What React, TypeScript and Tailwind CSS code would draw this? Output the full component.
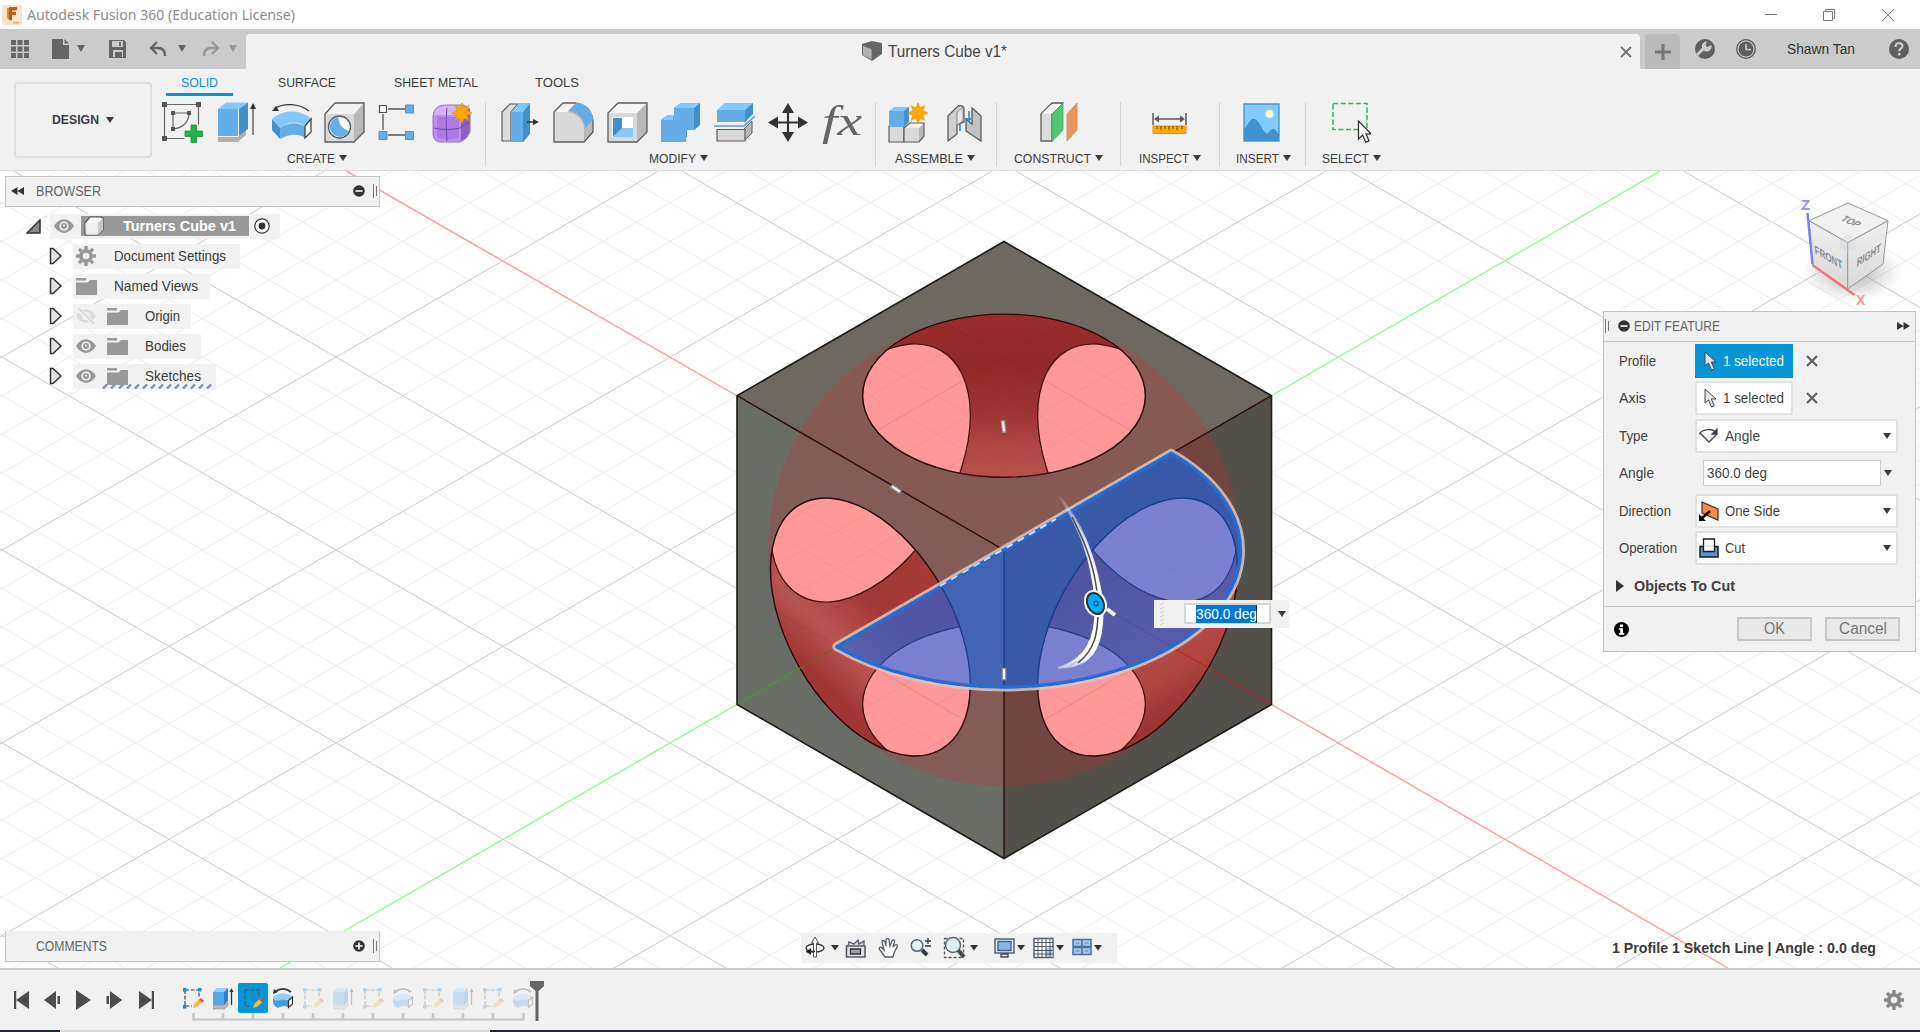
import React, { useLayoutEffect, useRef } from "react";

/** Text condensed or widened to an exact width. */
function Fit({ w, className = "", children }: { w: number; className?: string; children: string }) {
  const ref = useRef<HTMLSpanElement>(null);
  useLayoutEffect(() => {
    const el = ref.current;
    if (el && el.offsetWidth) el.style.transform = `scaleX(${w / el.getBoundingClientRect().width})`;
  }, [w]);
  return (
    <span className={"inline-block shrink-0 whitespace-nowrap " + className} style={{ width: w }}>
      <span ref={ref} className="inline-block origin-left">{children}</span>
    </span>
  );
}

function Caret({ className = "text-[#3c3c3c]" }: { className?: string }) {
  return (
    <svg width="8" height="6" viewBox="0 0 8 6" className={"shrink-0 " + className}>
      <path d="M0 0h8L4 6z" fill="currentColor" />
    </svg>
  );
}

/* ---------- large ribbon icons, 41 x 41 ---------- */
function Big({ children, w = 41 }: { children: React.ReactNode; w?: number }) {
  return (
    <svg width={w} height="41" viewBox={`0 0 ${w} 41`} className="shrink-0">
      {children}
    </svg>
  );
}
const star = "M0-11L2.2-5.6 7.4-8 5.4-2.6 11 0 5.4 2.6 7.4 8 2.2 5.6 0 11-2.2 5.6-7.4 8-5.4 2.6-11 0-5.4-2.6-7.4-8-2.2-5.6z";

const SketchIcon = () => (
  <Big>
    <g fill="none" stroke="#666" strokeWidth="1.2">
      <path d="M2.5 2.5h34v20M2.5 2.5v34h20M11 11h16M11 11v16M27 11c0 9-6 15-16 16" />
    </g>
    <g fill="#555">
      <path d="M0 0h5v5H0zM34 0h5v5h-5zM0 34h5v5H0zM9 9h4v4H9zM25 9h4v4h-4zM9 25h4v4H9z" />
    </g>
    <path d="M29 23h5.500v6h6v5.500h-6v6H29v-6h-6V29h6z" fill="#22b14c" stroke="#15923a" strokeWidth=".8" />
  </Big>
);
const ExtrudeIcon = () => (
  <Big>
    <path d="M2 35h20l8-7v5l-8 7H2z" fill="#b0b0b0" />
    <path d="M2 7h20v27H2z" fill="#64ade6" />
    <path d="M2 7l8-6.500h22L23 7z" fill="#85c9fc" />
    <path d="M23 7l9-6.500V27l-9 7z" fill="#4290cb" />
    <path d="M37 5v28" stroke="#444" strokeWidth="1.200" />
    <path d="M34 7l3-6 3 6z" fill="#333" />
  </Big>
);
const RevolveIcon = () => (
  <span className="relative left-[1.500px]">
    <Big>
      <path d="M3 6C12 1 27 1 37 9" fill="none" stroke="#333" strokeWidth="1.300" />
      <path d="M0 9l4-5 3 5z" fill="#333" />
      <path d="M0 17C11 7 28 7 40 17l-6 8C25 19 17 19 8 26z" fill="#83c8fb" />
      <path d="M0 17l8 9v11l-8-9z" fill="#4290cb" />
      <path d="M8 26c9-6 17-6 26-1v11c-9-5-17-4-26 1z" fill="#64ade6" />
      <path d="M33 24l6-7v13l-6 6z" fill="#fff" stroke="#444" strokeWidth="1.300" />
    </Big>
  </span>
);
const HoleIcon = () => (
  <Big>
    <path d="M1 12L11 1h29v29L30 40H1z" fill="#b8b8b8" />
    <path d="M1 12L11 1h29L30 12z" fill="#f4f4f4" />
    <path d="M1 12h29v28H1z" fill="#d9d9d9" />
    <path d="M1 12L11 1h29v29L30 40H1z" fill="none" stroke="#5c5c5c" strokeWidth="1.300" />
    <circle cx="15.500" cy="25" r="11" fill="#f6f6f6" stroke="#5c5c5c" strokeWidth="1.300" />
    <path d="M14 15a10 10 0 1 0 11 14C18 27 15 22 14 15z" fill="#64ade6" />
  </Big>
);
const PatternIcon = () => (
  <Big>
    <path d="M10 7h17M5 12v16M10 33h17" stroke="#555" strokeWidth="1.300" />
    <path d="M1.500 3.500h7v7h-7z" fill="#fff" stroke="#555" strokeWidth="1.200" />
    <path d="M27.500 3h8v8h-8zM1 29.500h8v8H1zM27.500 29.500h8v8h-8z" fill="#64ade6" stroke="#4a93cf" />
  </Big>
);
const FormIcon = () => (
  <Big>
    <path d="M1 14C2 5 8 3 15 3h16c5 1 7 6 7 12v14c-2 7-6 9-10 11H9c-5 0-8-3-8-9z" fill="#bd8df0" />
    <path d="M1 14C2 5 8 3 15 3h14l-4 10H5z" fill="#d4b2fa" />
    <path d="M29 12l9-6v22c-2 6-5 9-9 11z" fill="#8d5fc4" />
    <path d="M5 15h22v20c-8 3-15 3-22 0z" fill="#aa7be4" />
    <path d="M15 6c-1 10-1 20 0 33M2 26c9 2 17 2 26 0l9-6" fill="none" stroke="#7447a8" />
    <path d="M1 14C2 5 8 3 15 3h16c5 1 7 6 7 12v14c-2 7-6 9-10 11H9c-5 0-8-3-8-9z" fill="none" stroke="#9b6dd2" />
    <path d={star} transform="translate(30 11) scale(.92)" fill="#ffa800" stroke="#e59400" strokeWidth=".7" />
  </Big>
);
const PressPullIcon = () => (
  <Big>
    <path d="M3 10L11 2h8L12 10v29H3z" fill="#ddd" stroke="#5c5c5c" strokeWidth="1.200" />
    <path d="M12 10h13v30H12z" fill="#64ade6" />
    <path d="M12 10l8-9h11l-7 9z" fill="#85c9fc" />
    <path d="M24 10l7-9v31l-7 8z" fill="#4290cb" />
    <path d="M28 20h7" stroke="#333" strokeWidth="1.500" />
    <path d="M34 17l6 3-6 3z" fill="#333" />
  </Big>
);
const FilletIcon = () => (
  <Big>
    <path d="M1 10L10 1h12c11 1 17 9 18 18v11l-9 10H1z" fill="#b8b8b8" />
    <path d="M1 10L10 1h12l-7 9z" fill="#f5f5f5" />
    <path d="M1 10h13c10 1 17 8 17 17v13H1z" fill="#d9d9d9" />
    <path d="M1 10L10 1h12c11 1 17 9 18 18v11l-9 10H1z" fill="none" stroke="#5c5c5c" strokeWidth="1.300" />
    <path d="M15 9l8-8c11 0 17 8 17 17l-8 8C32 17 25 9 15 9z" fill="#64ade6" />
  </Big>
);
const ShellIcon = () => (
  <Big>
    <path d="M1 11L11 1h29v29L30 40H1z" fill="#b8b8b8" />
    <path d="M1 11L11 1h29L30 11z" fill="#f5f5f5" />
    <path d="M1 11h29v29H1z" fill="#d9d9d9" />
    <path d="M1 11L11 1h29v29L30 40H1z" fill="none" stroke="#5c5c5c" strokeWidth="1.300" />
    <path d="M5 15h21v20H5z" fill="#fff" />
    <path d="M6 16h9v11l-9 8z" fill="#4290cb" />
    <path d="M6 35l9-9h11v9z" fill="#85c9fc" />
  </Big>
);
const CombineIcon = () => (
  <Big>
    <path d="M1 18l7-5h6V6l7-5h19v22l-6 5h-7v7l-6 5H1z" fill="#4290cb" />
    <path d="M1 18l7-5h6l-1 5zM14 6l7-5h19l-6 5z" fill="#85c9fc" />
    <path d="M1 18h13V6h20v22h-8v12H1z" fill="#64ade6" />
  </Big>
);
const SplitIcon = () => (
  <Big>
    <path d="M3 8h29v12H3z" fill="#64ade6" />
    <path d="M3 8l8-7h28l-8 7z" fill="#85c9fc" />
    <path d="M31 8l8-7v11l-8 8z" fill="#4290cb" />
    <path d="M0 24h30L41 14" fill="none" stroke="#4aa3e6" strokeWidth="1.600" />
    <path d="M30 27l8-8v12l-8 8z" fill="#b8b8b8" stroke="#5c5c5c" />
    <path d="M3 27.500h28V39H3z" fill="#d9d9d9" stroke="#5c5c5c" strokeWidth="1.200" />
  </Big>
);
const MoveIcon = () => (
  <Big>
    <path d="M20 8v25M8 20.500h25" stroke="#333" strokeWidth="2.200" />
    <path d="M20 1l6 10H14zM20 40l6-10H14zM0 20.500l10-6v12zM40 20.500l-10-6v12z" fill="#333" />
  </Big>
);
const NewComponentIcon = () => (
  <Big>
    <path d="M2 24h15v16H2z" fill="#d9d9d9" stroke="#5c5c5c" strokeWidth="1.200" />
    <path d="M17 26l6-5h14v13l-5 6H17z" fill="#b8b8b8" />
    <path d="M17 26l6-5h14l-5 5z" fill="#f3f3f3" />
    <path d="M17 26h15v14H17z" fill="#d9d9d9" />
    <path d="M17 26l6-5h14v13l-5 6H17z" fill="none" stroke="#5c5c5c" strokeWidth="1.200" />
    <path d="M2 9h15v16H2z" fill="#64ade6" />
    <path d="M2 9l5-4h16l-5 4z" fill="#85c9fc" />
    <path d="M17 9l5-4v15l-5 5z" fill="#4290cb" />
    <path d={star} transform="translate(31 11) scale(.92)" fill="#ffa800" stroke="#e59400" strokeWidth=".7" />
  </Big>
);
const JointIcon = () => (
  <span className="relative -left-px">
    <Big>
      <path d="M4 14L14 4c4-1 6 0 6 3v13l-7 3v9l-9 7z" fill="#cfcfcf" stroke="#5c5c5c" strokeWidth="1.300" />
      <path d="M13 10l6-5v14l-6 4z" fill="#e6e6e6" stroke="#777" strokeWidth=".8" />
      <path d="M37 14l-9-8v16l-6-5v12l15 10z" fill="#c2c2c2" stroke="#5c5c5c" strokeWidth="1.300" />
      <path d="M16 21v8M25 9v10" stroke="#2e8bdc" strokeWidth="1.600" />
      <path d="M22 16h6l-3 4z" fill="#2e8bdc" />
    </Big>
  </span>
);
const PlaneIcon = () => (
  <Big>
    <path d="M3 12L14 1h11L14 12v27H3z" fill="#dcdcdc" stroke="#5c5c5c" strokeWidth="1.300" />
    <path d="M4 11.500L14 2h10L14 11.500z" fill="#f6f6f6" />
    <path d="M14 12L25 1v27L14 39.500z" fill="#52c577" stroke="#3cad61" strokeWidth=".8" />
    <path d="M29 12L39 1v27L29 39z" fill="#e6965f" stroke="#d9854c" strokeWidth=".8" />
  </Big>
);
const MeasureIcon = () => (
  <Big>
    <path d="M4 11v12M37 11v12M7 17h27" stroke="#5a5a5a" strokeWidth="1.500" />
    <path d="M5 17l5-3.500v7zM36 17l-5-3.500v7z" fill="#5a5a5a" />
    <path d="M4 24h33v7.500H4z" fill="#ffa90a" stroke="#e09208" />
    <path d="M8 24v3M12 24v4M16 24v3M20 24v4M24 24v3M28 24v4M33 24v3" stroke="#6b4b10" strokeWidth="1" />
  </Big>
);
const ImageIcon = () => (
  <Big>
    <path d="M3 2h35v37H3z" fill="#83cafd" stroke="#4598d2" strokeWidth="1.400" />
    <path d="M3 27c4-4 6-11 10-10 6 1 8 12 13 15 3-2 4-6 7-5 2 1 3 4 5 5v7H3z" fill="#3f92cd" />
    <circle cx="28.500" cy="12" r="4" fill="#fdfbd0" stroke="#d9dca0" strokeWidth=".7" />
  </Big>
);
const SelectIcon = () => (
  <Big>
    <path d="M3 1.500h34v26H3z" fill="none" stroke="#35b45c" strokeWidth="1.500" strokeDasharray="5.200 2.400" />
    <path d="M28.500 19v18l4.200-4 3 7.200 3.300-1.400-3-7h5z" fill="#fff" stroke="#333" strokeWidth="1.300" />
  </Big>
);
const FxIcon = () => (
  <span className="block w-[42px] font-['Liberation_Serif',serif] text-[42px] leading-[38px] text-[#666] italic">
    <Fit w={40}>fx</Fit>
  </span>
);

type Group = { label: string; lw: number; cls: string; icons: React.FC[]; shift?: string };
const groups: Group[] = [
  { label: "CREATE", lw: 48, cls: "w-[330px] pr-[6px]", icons: [SketchIcon, ExtrudeIcon, RevolveIcon, HoleIcon, PatternIcon, FormIcon], shift: "pr-[2px]" },
  { label: "MODIFY", lw: 47, cls: "w-[390px] pl-[7px] pr-[5px]", icons: [PressPullIcon, FilletIcon, ShellIcon, CombineIcon, SplitIcon, MoveIcon, FxIcon], shift: "pr-[6px]" },
  { label: "ASSEMBLE", lw: 68, cls: "w-[121px] px-[2px]", icons: [NewComponentIcon, JointIcon], shift: "pr-[2px]" },
  { label: "CONSTRUCT", lw: 77, cls: "w-[124px]", icons: [PlaneIcon] },
  { label: "INSPECT", lw: 50, cls: "w-[99px] pr-[1px]", icons: [MeasureIcon] },
  { label: "INSERT", lw: 43, cls: "w-[86px] pr-[2px]", icons: [ImageIcon], shift: "pl-[3px]" },
  { label: "SELECT", lw: 47, cls: "w-[94px] border-r-0 pr-[5px]", icons: [SelectIcon], shift: "pl-[2px]" },
];

function TitleBar() {
  return (
    <div className="flex h-[29px] items-center bg-white pl-[2px]">
      <svg width="20" height="20" viewBox="0 0 20 20">
        <rect width="20" height="20" rx="1" fill="#fbe3cf" />
        <path d="M5 3h10l-2 3H9v10l-4-3z" fill="#e08a3c" />
        <path d="M7 2h8v3h-5v2h4v3h-4v5H7z" fill="#b05f1c" />
        <path d="M11 17h6v1.500h-6z" fill="#eba95f" />
      </svg>
      <div className="mb-[2px] ml-[5px] text-[#8c8c8c] font-['Noto_Sans',sans-serif] text-[15px] leading-[26px]">
        <Fit w={268}>Autodesk Fusion 360 (Education License)</Fit>
      </div>
      <svg width="160" height="28" viewBox="0 0 160 28" className="ml-auto mr-[9px]" fill="none" stroke="#7d7d7d">
        <path d="M14 13.500h12M72.500 10.500h9v9h-9zM74.500 10.500v-2h9v9h-2M131 8l12 12M143 8l-12 12" />
      </svg>
    </div>
  );
}

function TabStrip() {
  return (
    <div className="flex h-[40px] bg-[#cbcbcb] pt-[5px]">
      <svg width="246" height="35" viewBox="0 34 246 35" className="shrink-0 text-[#666]">
        <path fill="currentColor" d="M11 40h5v5h-5zM17.500 40h5v5h-5zM24 40h5v5h-5zM11 46.500h5v5h-5zM17.500 46.500h5v5h-5zM24 46.500h5v5h-5zM11 53h5v5h-5zM17.500 53h5v5h-5zM24 53h5v5h-5z" />
        <path fill="currentColor" d="M52 39h11v6h6v14H52zM64.500 39l4.500 4.500h-4.500zM77 45h8l-4 7z" />
        <path fill="currentColor" fillRule="evenodd" d="M109 40h15l2 2v16h-17zM112 41v6h11v-6zM113 50v7h2v-5h7v5h1v-7zM119 42h2v4h-2z" />
        <path d="M157 42l-6 6 6 6M152 48h6c5 0 7 3 7 8" fill="none" stroke="currentColor" strokeWidth="2.400" />
        <path fill="currentColor" d="M178 45h8l-4 7z" />
        <g opacity=".5">
          <path d="M212 42l6 6-6 6M217 48h-6c-5 0-7 3-7 8" fill="none" stroke="currentColor" strokeWidth="2.400" />
          <path fill="currentColor" d="M229 45h8l-4 7z" />
        </g>
      </svg>
      <div className="flex w-[1394px] items-center rounded-t-[4px] bg-[#f1f1f1]">
        <div className="flex flex-1 items-center justify-center pl-[2px]">
          <svg width="20" height="20" viewBox="0 0 20 20" className="mb-px">
            <path d="M0 3L10 0l10 2v11l-10 7-10-6z" fill="#666" />
            <path d="M1 5l8.500 3v10.500L1 14z" fill="#aeb2b4" />
          </svg>
          <div className="ml-[6px] pt-px text-[16px] leading-[34px] text-[#444]">
            <Fit w={119}>Turners Cube v1*</Fit>
          </div>
        </div>
        <svg width="12" height="12" viewBox="0 0 12 12" className="mr-[8px] mt-[1px]">
          <path d="M1 1l10 10M11 1L1 11" stroke="#757575" strokeWidth="1.800" />
        </svg>
      </div>
      <div className="ml-[5px] flex w-[35px] items-center justify-center rounded-t-[4px] bg-[#bbb]">
        <svg width="16" height="16" viewBox="0 0 16 16"><path d="M8 0v16M0 8h16" stroke="#777" strokeWidth="3" /></svg>
      </div>
      <div className="flex h-[30px] flex-1 items-center">
        <svg width="20" height="20" viewBox="0 0 20 20" className="ml-[15px]">
          <circle cx="10" cy="10" r="10" fill="#5f5f5f" />
          <path d="M2 16l7-7" stroke="#cbcbcb" strokeWidth="3" />
          <path d="M16.500 6a5 5 0 1 1-4.500-3.500L10.500 6l1.500 2z" fill="#cbcbcb" />
        </svg>
        <svg width="20" height="20" viewBox="0 0 20 20" className="ml-[21px]">
          <circle cx="10" cy="10" r="9.300" fill="none" stroke="#5f5f5f" strokeWidth="1.300" />
          <circle cx="10" cy="10" r="7.500" fill="#5f5f5f" />
          <path d="M10 5v5.500h5" fill="none" stroke="#cbcbcb" strokeWidth="1.600" />
        </svg>
        <div className="ml-[31px] text-[14px] leading-[28px] text-[#333]"><Fit w={68}>Shawn Tan</Fit></div>
        <svg width="20" height="20" viewBox="0 0 20 20" className="ml-[34px]">
          <circle cx="10" cy="10" r="10" fill="#5f5f5f" />
          <path d="M6.500 8c0-5 7-5 7-1 0 2.500-3.300 2.500-3.300 5.200" fill="none" stroke="#cbcbcb" strokeWidth="2.200" />
          <path d="M9 14h2.500v2.500H9z" fill="#cbcbcb" />
        </svg>
      </div>
    </div>
  );
}

function Ribbon() {
  return (
    <div className="flex h-[102px] border-b border-[#dcdcdc] bg-[#f1f1f1] text-[13.500px] text-[#3c3c3c]">
      <div className="ml-[14px] mt-[13px] flex h-[76px] w-[138px] items-center justify-center gap-[7px] rounded-[4px] border-2 border-[#dedede] text-[13.500px] font-bold">
        <Fit w={47}>DESIGN</Fit>
        <Caret />
      </div>
      <div className="ml-[4px] flex flex-col">
        <div className="flex h-[33px] items-start pt-[5px] leading-[18px]">
          <div className="ml-[10px] flex h-[22px] w-[67px] justify-center rounded-[1px] border-b-[3.500px] border-[#0696d7] pr-px text-[#0696d7]">
            <Fit w={37}>SOLID</Fit>
          </div>
          <Fit w={58} className="ml-[45px]">SURFACE</Fit>
          <Fit w={84} className="ml-[58px]">SHEET METAL</Fit>
          <Fit w={44} className="ml-[57px]">TOOLS</Fit>
        </div>
        <div className="flex h-[64px]">
          {groups.map((g) => (
            <div key={g.label} className={"flex flex-col border-r border-[#d6d6d6] " + g.cls}>
              <div className="flex h-[42px] shrink-0 justify-around">
                {g.icons.map((I, i) => <I key={i} />)}
              </div>
              <div className={"flex h-[30px] shrink-0 items-center justify-center gap-[4px] leading-[20px] " + (g.shift ?? "")}>
                <Fit w={g.lw}>{g.label}</Fit>
                <span className="mb-[2px] flex"><Caret /></span>
              </div>
            </div>
          ))}
        </div>
      </div>
    </div>
  );
}

/* ---------- modelling canvas ---------- */
const CX = 1004;
const CY = 550;
const T = 0.5774;
function gridLines(step: number, skipMajor: boolean) {
  let d = "";
  for (let k = -46; k <= 46; k++) {
    if (skipMajor && k % 5 === 0) continue;
    const c = k * step * 2 * T;
    d += `M0 ${(CY + c - T * CX).toFixed(1)}L1920 ${(CY + c + T * (1920 - CX)).toFixed(1)}`;
    d += `M0 ${(CY + c + T * CX).toFixed(1)}L1920 ${(CY + c - T * (1920 - CX)).toFixed(1)}`;
  }
  return d;
}
const minor = gridLines(33.4, true);
const major = gridLines(167, false);
const HEX = "M1004 241.500L1271.500 395.700V704.500L1004 858.500 737 704.500V395.700z";
const HALF = "M1171.200 453.300A236.500 136.700 0 0 1 1240.500 550A236.500 136.700 0 0 1 1004 687A236.500 136.700 0 0 1 836.800 646.700z";

const faces = {
  top: { cx: 1004, cy: 395.7, rx: 141.3, ry: 81.6 },
  bottom: { cx: 1004, cy: 704.3, rx: 141.3, ry: 81.6 },
  right: { cx: 1137.6, cy: 627, rx: 81.6, ry: 141.3, transform: "rotate(30 1137.600 627)" },
  backLeft: { cx: 870.4, cy: 473, rx: 81.6, ry: 141.3, transform: "rotate(30 870.400 473)" },
  left: { cx: 870.4, cy: 627, rx: 81.6, ry: 141.3, transform: "rotate(-30 870.400 627)" },
  backRight: { cx: 1137.6, cy: 473, rx: 81.6, ry: 141.3, transform: "rotate(-30 1137.600 473)" },
};

function Canvas() {
  const pink = { fill: "#ff9898", stroke: "#3c0c0c", strokeWidth: 1.2 };
  return (
    <svg className="absolute inset-0" width="1920" height="797" viewBox="0 171 1920 797" fill="none">
      <defs>
        <clipPath id="cTop"><ellipse {...faces.top} /></clipPath>
        <clipPath id="cRight"><ellipse {...faces.right} /></clipPath>
        <clipPath id="cLeft"><ellipse {...faces.left} /></clipPath>
        <clipPath id="cHoles"><ellipse {...faces.top} /><ellipse {...faces.left} /><ellipse {...faces.right} /></clipPath>
        <clipPath id="cOutside"><path clipRule="evenodd" d={"M700 200h620v700H700z" + HALF} /></clipPath>
        <linearGradient id="gTop" x1="0" y1="314" x2="0" y2="477" gradientUnits="userSpaceOnUse">
          <stop offset="0" stopColor="#9c2c2b" /><stop offset=".3" stopColor="#902828" /><stop offset=".6" stopColor="#9c3532" /><stop offset=".8" stopColor="#b14642" /><stop offset="1" stopColor="#b9504c" />
        </linearGradient>
        <linearGradient id="gLeft" x1="770" y1="640" x2="950" y2="590" gradientUnits="userSpaceOnUse">
          <stop offset="0" stopColor="#9c3430" /><stop offset=".14" stopColor="#a03632" /><stop offset=".36" stopColor="#b85450" /><stop offset=".62" stopColor="#a43a36" /><stop offset="1" stopColor="#a43b36" />
        </linearGradient>
        <linearGradient id="gRight" x1="1060" y1="580" x2="1220" y2="670" gradientUnits="userSpaceOnUse">
          <stop offset="0" stopColor="#9c3632" /><stop offset=".6" stopColor="#b24a46" /><stop offset=".8" stopColor="#b04642" /><stop offset="1" stopColor="#993430" />
        </linearGradient>
        <linearGradient id="gArc" x1="0" y1="493" x2="0" y2="668" gradientUnits="userSpaceOnUse">
          <stop offset="0" stopColor="#fff" stopOpacity="0" /><stop offset=".3" stopColor="#fff" stopOpacity=".75" /><stop offset=".5" stopColor="#fff" /><stop offset=".93" stopColor="#fff" /><stop offset="1" stopColor="#fff" stopOpacity=".3" />
        </linearGradient>
        <radialGradient id="shade"><stop offset="0" stopColor="#777" stopOpacity=".6" /><stop offset="1" stopColor="#999" stopOpacity="0" /></radialGradient>
        <linearGradient id="vl" x1="0" y1="0" x2="0" y2="1"><stop offset="0" stopColor="#efefef" /><stop offset="1" stopColor="#d8d8d8" /></linearGradient>
      </defs>
      <path fill="#fefefe" d="M0 171h1920v797H0z" />
      <path d={minor} stroke="#ebebeb" />
      <path d={major} stroke="#cbcbcb" />
      <path d="M346 171L737 395.700M1271.500 704.500L1728 968" stroke="#ff9c9c" strokeWidth="1.300" />
      <path d="M1660 171L1271.500 395.700M737 704.500L280 968" stroke="#93ff93" strokeWidth="1.300" />

      {/* cube body */}
      <path d="M1004 241.500L1271.500 395.700 1004 550 737 395.700z" fill="#6d6960" />
      <path d="M737 395.700L1004 550V858.500L737 704.500z" fill="#6a6c66" />
      <path d="M1271.500 395.700L1004 550V858.500L1271.500 704.500z" fill="#535049" />
      <circle cx="1004" cy="550" r="236" fill="#ea191f" fillOpacity=".2" />
      <path d="M737 395.700L1004 550 1271.500 395.700M1004 550V858.500" stroke="#2a0c0a" strokeWidth="1.400" />
      <g clipPath="url(#cTop)">
        <ellipse {...faces.top} fill="url(#gTop)" />
        <ellipse {...faces.backLeft} {...pink} />
        <ellipse {...faces.backRight} {...pink} />
      </g>
      <g clipPath="url(#cLeft)">
        <ellipse {...faces.left} fill="url(#gLeft)" />
        <ellipse {...faces.backLeft} {...pink} />
        <ellipse {...faces.bottom} {...pink} />
      </g>
      <g clipPath="url(#cRight)">
        <ellipse {...faces.right} fill="url(#gRight)" />
        <ellipse {...faces.backRight} {...pink} />
        <ellipse {...faces.bottom} {...pink} />
      </g>
      <g stroke="#260a0a" strokeWidth="1.400">
        <ellipse {...faces.top} /><ellipse {...faces.left} /><ellipse {...faces.right} />
      </g>
      <g clipPath="url(#cHoles)">
        <path d={minor} stroke="#402020" strokeOpacity=".045" />
        <path d={major} stroke="#402020" strokeOpacity=".13" />
      </g>
      <path d="M1060 582.300L1271.500 704.500" stroke="#c42020" strokeOpacity=".8" strokeWidth="1.200" />
      <path d="M833 649L800 668" stroke="#7a6420" strokeWidth="1.200" />
      <path d="M800 668L737 704.500" stroke="#3f9a30" strokeWidth="1.200" />
      <path d={HEX} stroke="#1c1c1a" strokeWidth="1.600" />

      {/* selected half-disc profile */}
      <path d={HALF} fill="#0d6bfd" fillOpacity=".55" />
      <path d={HALF} clipPath="url(#cOutside)" stroke="#dcc4c0" strokeOpacity=".85" strokeWidth="9" strokeLinejoin="round" />
      <path d={HALF} stroke="#216dd3" strokeWidth="3.400" strokeLinejoin="round" />
      <path d="M984 560.500L1056 519" stroke="#d0e2f2" strokeWidth="2" strokeDasharray="7 6" />
      <path d="M940 586L984 560.500" stroke="#d0e2f2" strokeWidth="1.500" strokeDasharray="7 6" />

      {/* rotation handle */}
      <path d="M1057 493C1082 530 1092 560 1096 602C1097 640 1086 660 1058 668C1096 668 1104 640 1102 602C1096 560 1082 522 1057 493z" fill="url(#gArc)" stroke="url(#gArc)" strokeWidth="2.500" />
      <path d="M1072 517C1088 548 1095 570 1098 600C1099 636 1094 650 1078 663" stroke="#505050" strokeWidth="1.600" />
      <path d="M1107 609l8 6" stroke="#fff" strokeWidth="4" />
      <ellipse cx="1095.500" cy="603.500" rx="8.500" ry="11.500" transform="rotate(-25 1095.500 603.500)" fill="#0aaaff" stroke="#fff" strokeWidth="5" />
      <ellipse cx="1095.500" cy="603.500" rx="8" ry="11" transform="rotate(-25 1095.500 603.500)" fill="#0aaaff" stroke="#1d3440" strokeWidth="2" />
      <circle cx="1096" cy="603.500" r="2.300" stroke="#065f96" strokeWidth="1.300" />
      <g strokeLinecap="square">
        <path d="M1003 422.500l1 8M1004 670v8M893 487l6 4" stroke="#999" strokeWidth="4.500" />
        <path d="M1003 422.500l1 8M1004 670v8M893 487l6 4" stroke="#f3f3f3" strokeWidth="2" />
      </g>

      {/* view cube */}
      <ellipse cx="1852" cy="272" rx="50" ry="30" fill="url(#shade)" />
      <path d="M1848 203l40 17.700-40.300 22-38.700-22z" fill="#f1f1f1" stroke="#999" />
      <path d="M1809 220.700l38.700 22V289l-35-24z" fill="url(#vl)" stroke="#999" />
      <path d="M1847.700 242.700l40.300-22-5 43.300-35.300 25z" fill="url(#vl)" stroke="#999" />
      <path d="M1847.700 234l8 5v10l-8 3-8-3v-10z" fill="#c9d3dd" fillOpacity=".35" />
      <path d="M1807.500 213l5 51" stroke="#8080f5" strokeWidth="2.500" />
      <path d="M1812.500 265l42 30" stroke="#f07878" strokeWidth="2.500" />
      <g fontFamily="'Liberation Sans', sans-serif">
        <text x="1801" y="210" fontSize="15" fontWeight="bold" fill="#8f8ff5">Z</text>
        <text x="1856" y="305" fontSize="14" fontWeight="bold" fill="#ff8f8f">X</text>
        <g fontSize="12" fontWeight="bold" fill="#868b91">
          <text transform="matrix(.86 .5 .1 1 1815 253.500)" textLength="32" lengthAdjust="spacingAndGlyphs">FRONT</text>
          <text transform="matrix(.86 -.56 -.08 1 1856.500 267)" textLength="28" lengthAdjust="spacingAndGlyphs">RIGHT</text>
          <text transform="matrix(.86 .4 -.7 .55 1840 220)" textLength="19" lengthAdjust="spacingAndGlyphs">TOP</text>
        </g>
      </g>
    </svg>
  );
}

function Grip() {
  return (
    <svg width="4" height="14" viewBox="0 0 4 14" className="shrink-0"><path d="M.5 0v14M3.500 2v10" stroke="#777" /></svg>
  );
}
function Disc({ plus = false }: { plus?: boolean }) {
  return (
    <svg width="12" height="12" viewBox="0 0 12 12" className="shrink-0">
      <circle cx="6" cy="6" r="5.800" fill="#333" />
      <path d={plus ? "M2.500 6h7M6 2.500v7" : "M2.500 6h7"} stroke="#fff" strokeWidth="1.600" />
    </svg>
  );
}
const Eye = () => (
  <svg width="20" height="14" viewBox="0 0 20 14" className="shrink-0">
    <path d="M0 7C5-2 15-2 20 7 15 16 5 16 0 7z" fill="#999" />
    <circle cx="10" cy="7" r="4.600" fill="#f0f0f0" /><circle cx="10" cy="7" r="3" fill="#999" /><circle cx="10" cy="6.500" r="1" fill="#eee" />
  </svg>
);
const EyeOff = () => (
  <svg width="20" height="16" viewBox="0 0 20 16" className="shrink-0">
    <path d="M0 8C5-1 15-1 20 8 15 17 5 17 0 8z" fill="#dcdcdc" />
    <circle cx="10" cy="8" r="4" fill="#f2f2f2" /><circle cx="10" cy="8" r="2.500" fill="#dcdcdc" />
    <path d="M1 0l17 16" stroke="#f2f2f2" strokeWidth="4" /><path d="M2 0l16 15.500" stroke="#d4d4d4" strokeWidth="1.500" />
  </svg>
);
const Folder = () => (
  <svg width="21" height="17" viewBox="0 0 21 17" className="shrink-0">
    <path d="M0 4.500h11.500L14 2h7v15H0z" fill="#999" /><path d="M0 0h10v2.500H0z" fill="#999" />
  </svg>
);
function Gear({ size, color }: { size: number; color: string }) {
  return (
    <svg width={size} height={size} viewBox="0 0 20 20" className="shrink-0">
      <g stroke={color} strokeWidth="3.400">
        <path d="M10 0v20M0 10h20M2.900 2.900l14.200 14.200M17.100 2.900L2.900 17.100" />
      </g>
      <circle cx="10" cy="10" r="7" fill={color} /><circle cx="10" cy="10" r="3.200" fill="#f1f1f1" />
    </svg>
  );
}

function TreeRow({ width, icons, label, lw, last = false }: { width: string; icons: React.ReactNode; label: string; lw: number; last?: boolean }) {
  return (
    <div className="flex h-[30px] items-center">
      <svg width="14" height="18" viewBox="0 0 14 18" className="mr-[10px] shrink-0">
        <path d="M1.500 1.500H4L12 9l-8 7.500H1.500z" fill="#e2e2e4" stroke="#333" strokeWidth="1.500" />
      </svg>
      <div className={"relative flex h-[25px] items-center bg-[#f2f2f2] pl-[3px] " + width}>
        {icons}
        <Fit w={lw} className="text-[15px] leading-[24px] text-[#3a3a3a]">{label}</Fit>
        {last && (
          <svg width="112" height="5" viewBox="0 0 112 5" className="absolute bottom-0 left-[29px]">
            {Array.from({ length: 14 }, (_, i) => (
              <path key={i} d={`M${i * 8 + 1} 4.500l4-4`} stroke="#7d92b8" strokeWidth="2.400" />
            ))}
          </svg>
        )}
      </div>
    </div>
  );
}

function Browser() {
  return (
    <div>
      <div className="flex h-[31px] w-[375px] items-center border border-[#c6c6c6] bg-[#f1f1f1] pb-px pl-[5px] pr-[2px]">
        <svg width="13" height="8" viewBox="0 0 13 8" className="shrink-0"><path d="M6.500 0v8L0 4zM13 0v8L6.500 4z" fill="#333" /></svg>
        <Fit w={65} className="ml-[12px] text-[14px] leading-[26px] text-[#666]">BROWSER</Fit>
        <span className="ml-auto mr-[8px] flex"><Disc /></span>
        <Grip />
      </div>
      <div className="mt-[4px] flex h-[30px] items-center pl-[21px]">
        <svg width="15" height="15" viewBox="0 0 15 15" className="mr-[9px] shrink-0"><path d="M1 14L14 1v13z" fill="#8a8a8a" stroke="#333" strokeWidth="1.500" /></svg>
        <div className="flex h-[25px] w-[230px] items-center bg-[#f2f2f2] pl-[4px]">
          <Eye />
          <div className="ml-[7px] flex h-[20px] w-[168px] items-center bg-[#999] pl-[3px]">
            <svg width="20" height="20" viewBox="0 0 20 20" className="mr-[19px] shrink-0">
              <path d="M1 7l5-6h11l2 1v12l-5 5H2l-1-1z" fill="#fafafa" stroke="#555" strokeWidth="1.200" />
              <path d="M14 7l5-5v12l-5 5z" fill="#c5c5c5" />
              <path d="M1.500 7H14v11.500H2z" fill="#eceef2" />
            </svg>
            <Fit w={113} className="text-[15px] font-bold leading-[20px] text-white">Turners Cube v1</Fit>
          </div>
          <svg width="16" height="16" viewBox="0 0 16 16" className="ml-[5px] shrink-0"><circle cx="8" cy="8" r="7.200" fill="#fff" stroke="#333" strokeWidth="1.200" /><circle cx="8" cy="8" r="3.400" fill="#333" /></svg>
        </div>
      </div>
      <div className="pl-[44px]">
        <TreeRow width="w-[167px]" lw={112} label="Document Settings" icons={<span className="mr-[18px]"><Gear size={20} color="#999" /></span>} />
        <TreeRow width="w-[137px]" lw={84} label="Named Views" icons={<span className="mr-[17px]"><Folder /></span>} />
        <TreeRow width="w-[118px]" lw={35} label="Origin" icons={<><EyeOff /><span className="ml-[11px] mr-[17px]"><Folder /></span></>} />
        <TreeRow width="w-[128px]" lw={41} label="Bodies" icons={<><Eye /><span className="ml-[11px] mr-[17px]"><Folder /></span></>} />
        <TreeRow width="w-[143px]" lw={56} label="Sketches" last icons={<><Eye /><span className="ml-[11px] mr-[17px]"><Folder /></span></>} />
      </div>
    </div>
  );
}

const Pointer = () => (
  <svg width="14" height="20" viewBox="0 0 14 20" className="shrink-0">
    <path d="M1 1v14l3.500-3 3 7 2.800-1.200-3-6.800H12z" fill="#dfe3ea" stroke="#444" strokeWidth="1" />
  </svg>
);
const Cross = () => (
  <svg width="12" height="12" viewBox="0 0 12 12" className="ml-[13px]"><path d="M1 1l10 10M11 1L1 11" stroke="#666" strokeWidth="2.400" /></svg>
);
function FieldRow({ label, lw, children }: { label: string; lw: number; children: React.ReactNode }) {
  return (
    <div className="flex h-[37.500px] items-center">
      <div className="w-[76px]"><Fit w={lw}>{label}</Fit></div>
      {children}
    </div>
  );
}
function Dropdown({ icon, label, lw }: { icon: React.ReactNode; label: string; lw: number }) {
  return (
    <div className="flex h-[34px] w-[203px] items-center rounded-[2px] border-2 border-[#e2e2e2] bg-white pl-[2px] pr-[5px]">
      {icon}
      <Fit w={lw} className="ml-[6px]">{label}</Fit>
      <span className="ml-auto flex"><Caret /></span>
    </div>
  );
}

function EditPanel() {
  return (
    <div className="h-[341px] w-[313px] border border-[#c2c2c2] bg-[#f1f1f1] text-[15px] leading-[20px] text-[#3f3f3f]">
      <div className="flex h-[30px] items-center border-b border-[#c6c6c6] pb-px pl-px pr-[5px]">
        <Grip />
        <span className="ml-[9px] flex"><Disc /></span>
        <Fit w={86} className="ml-[4px] text-[14px] text-[#666]">EDIT FEATURE</Fit>
        <svg width="13" height="8" viewBox="0 0 13 8" className="ml-auto"><path d="M0 0v8l6.500-4zM6.500 0v8L13 4z" fill="#333" /></svg>
      </div>
      <div className="pl-[15px]">
        <FieldRow label="Profile" lw={37}>
          <div className="flex h-[34px] w-[98px] items-center bg-[#0696d7] pl-[9px] text-white"><Pointer /><Fit w={61} className="ml-[5px]">1 selected</Fit></div>
          <Cross />
        </FieldRow>
        <FieldRow label="Axis" lw={27}>
          <div className="flex h-[34px] w-[98px] items-center rounded-[2px] border-2 border-[#e2e2e2] bg-white pl-[7px]"><Pointer /><Fit w={61} className="ml-[5px]">1 selected</Fit></div>
          <Cross />
        </FieldRow>
        <FieldRow label="Type" lw={29}>
          <Dropdown label="Angle" lw={35} icon={
            <svg width="20" height="20" viewBox="0 0 20 20" fill="none" stroke="#444" strokeWidth="1.300"><path d="M1 7l9 9 8-8M0 8C4 3 13 2 17 6" /><path d="M18 3v5h-5z" fill="#333" /></svg>
          } />
        </FieldRow>
        <FieldRow label="Angle" lw={35}>
          <div className="ml-[8px] mr-[3px] flex h-[26px] w-[178px] items-center border border-[#cfcfcf] bg-white pl-[3px]"><Fit w={60}>360.0 deg</Fit></div>
          <Caret />
        </FieldRow>
        <FieldRow label="Direction" lw={52}>
          <Dropdown label="One Side" lw={55} icon={
            <svg width="20" height="20" viewBox="0 0 20 20"><path d="M3 1l16 7v11L3 12z" fill="#f58a42" stroke="#333" strokeWidth="1.200" /><path d="M11 10l-9 8" stroke="#000" strokeWidth="2.400" /><path d="M0 20v-7l7 7z" /></svg>
          } />
        </FieldRow>
        <FieldRow label="Operation" lw={58}>
          <Dropdown label="Cut" lw={20} icon={
            <svg width="20" height="20" viewBox="0 0 20 20"><path d="M1 8.500h18V19H1z" fill="#5b94cb" stroke="#1b1b1b" strokeWidth="1.500" /><path d="M4.500 1h11v12.500h-11z" fill="#fff" stroke="#1b1b1b" strokeWidth="1.300" /><path d="M5 8h10" stroke="#bbb" strokeWidth=".8" /></svg>
          } />
        </FieldRow>
      </div>
      <div className="flex h-[39px] items-center pb-[2px] pl-[12px] font-bold">
        <svg width="8" height="12" viewBox="0 0 8 12"><path d="M0 0v12l8-6z" fill="#333" /></svg>
        <Fit w={101} className="ml-[10px]">Objects To Cut</Fit>
      </div>
      <div className="flex h-[45px] items-center border-t border-[#c6c6c6] pl-[10px] pr-[15px] text-[16px] text-[#777]">
        <svg width="15" height="15" viewBox="0 0 15 15"><circle cx="7.500" cy="7.500" r="7.500" /><path d="M6 2.500h3v2.500H6zM5 6.200h4v4.800h1.200v1.700H5V11h1.200V7.800H5z" fill="#fff" /></svg>
        <div className="ml-auto flex h-[24px] w-[75px] items-center justify-center border-2 border-[#c9c9c9] bg-[#e8e8e8]"><Fit w={21}>OK</Fit></div>
        <div className="ml-[13px] flex h-[24px] w-[75px] items-center justify-center border-2 border-[#c9c9c9] bg-[#e8e8e8]"><Fit w={48}>Cancel</Fit></div>
      </div>
    </div>
  );
}

function NavBar() {
  return (
    <div className="h-[30px] w-[316px] bg-[#f1f1f1]">
      <svg width="316" height="30" viewBox="0 0 316 30" fill="none" stroke="#444b57" strokeWidth="1.300">
        <ellipse cx="14" cy="15" rx="9" ry="4" stroke="#333" />
        <path d="M12.500 24V10h-2L14 4l3.500 6h-2v14z" fill="#fff" stroke="#555" strokeWidth="1" />
        <path d="M5 18.500h9" stroke="#333" strokeWidth="1.500" /><path d="M10 15v7l-5-3.500z" fill="#222" stroke="none" />
        <path d="M47 13l1-4 5 2 4-4 1 4 5-3v5" fill="#cfd6dc" stroke="#555d6b" strokeWidth="1.300" />
        <path d="M45.500 13h18.500v11H45.500z" fill="#e3e3e3" stroke="#555d6b" strokeWidth="1.600" />
        <path d="M49.500 16h10v5h-10z" fill="#9aa3ad" stroke="#333" />
        <path d="M84 24l-5-7c-2-2 0-4 2-2l2 2-2-8c0-2 2-2 3 0l1 4 0-6c0-2 3-2 3 0l1 6 2-5c1-2 3-1 2.500 1L92 14l2-2c2-1 3 0 2 2l-3 6-1 4z" fill="#fff" stroke="#555d6b" />
        <path d="M121 17l5 5" stroke="#333b49" strokeWidth="4" /><circle cx="116" cy="12.500" r="5.800" fill="#e6f4f4" stroke="#5d6977" strokeWidth="1.500" />
        <path d="M127 5v6M124 8h6M124 13h6" stroke="#333" />
        <path d="M143.500 5.500h19v19h-19z" strokeDasharray="3 2" stroke="#555" /><path d="M157 17l6 7" stroke="#444" strokeWidth="4" /><circle cx="152" cy="12" r="7.500" fill="#e0f0ee" stroke="#5d6977" strokeWidth="1.500" />
        <path d="M194 6h19v14h-19z" fill="#e8e8e8" stroke="#5a6270" strokeWidth="1.500" /><path d="M197 8.500h13v9h-13z" fill="#8fb4e3" stroke="#3a5f9a" /><path d="M200 21h7v3h-7z" fill="#ddd" />
        <path d="M233 5.500h19v19h-19z" fill="#fff" stroke="#5a6270" strokeWidth="1.500" /><path d="M244 15h8v9h-8z" fill="#b4cbe8" stroke="none" /><path d="M237 6v18M241 6v18M245 6v18M249 6v18M233 9.500h19M233 13.500h19M233 17.500h19M233 21h19" strokeWidth=".9" />
        <path d="M272 6.500h9v7h-9zM281 6.500h9v7h-9zM272 14.500h9v7h-9zM281 14.500h9v7h-9z" fill="#a9c5ec" stroke="#4d6fa5" strokeWidth="1.500" />
        <path d="M274.500 9h4v2h-4zM283.500 9h4v2h-4zM274.500 17h4v2h-4zM283.500 17h4v2h-4z" fill="#7fa6dc" stroke="none" />
        <path d="M30 12h8l-4 5.500zM169 12h8l-4 5.500zM216 12h8l-4 5.500zM255 12h8l-4 5.500zM293 12h8l-4 5.500z" fill="#333" stroke="none" />
      </svg>
    </div>
  );
}

function Viewport() {
  return (
    <div className="relative h-[797px] overflow-hidden">
      <Canvas />
      <div className="relative flex h-full">
        <div className="flex w-[801px] flex-col justify-between pb-[6px] pl-[5px] pt-[5px]">
          <Browser />
          <div className="flex h-[31px] w-[375px] items-center border border-t-0 border-[#c6c6c6] bg-[#f1f1f1] pl-[30px] pr-[2px]">
            <Fit w={71} className="text-[14px] leading-[26px] text-[#666]">COMMENTS</Fit>
            <span className="ml-auto mr-[8px] flex"><Disc plus /></span>
            <Grip />
          </div>
        </div>
        <div className="flex w-[316px] items-end pb-[5px]"><NavBar /></div>
        <div className="flex flex-1 flex-col items-end justify-between pb-[8px] pr-[4px] pt-[140px]">
          <EditPanel />
          <Fit w={264} className="mr-[40px] text-[14px] font-bold leading-[24px] text-[#3a3a3a]">1 Profile 1 Sketch Line | Angle : 0.0 deg</Fit>
        </div>
      </div>
      <div className="absolute left-[1154px] top-[429px] flex h-[28px] w-[135px] items-center bg-[#f1f1f1] pb-px">
        <svg width="5" height="24" viewBox="0 0 5 24" className="ml-[6px]"><path d="M0 3l4-2M0 7l4-2M0 11l4-2M0 15l4-2M0 19l4-2M0 23l4-2" stroke="#cfcfcf" /></svg>
        <div className="ml-[19px] flex h-[21px] w-[87px] items-center border-2 border-[#d4d4d4] bg-white pl-[10px]">
          <Fit w={61} className="h-[18px] border-r border-[#222] bg-[#0078d7] text-[15px] leading-[17px] text-white">360.0 deg</Fit>
        </div>
        <span className="ml-[7px]"><Caret /></span>
      </div>
    </div>
  );
}

/* ---------- timeline ---------- */
const TSketch = ({ sel = false }: { sel?: boolean }) => (
  <g>
    <path d="M2 3h14v7M2 3v16h7" fill="none" stroke={sel ? "#4a5560" : "#444"} strokeWidth="1.200" strokeDasharray="4 1.500" />
    {!sel && <path d="M0 1h3.500v3.500H0zM15 1h3.500v3.500H15zM0 18h3.500v3.500H0z" fill="#1090e0" />}
    <path d="M10 21l1.500-4.500 5-4.500 3 3-5 4.500z" fill="#f8b644" /><path d="M16 12.500l2-1.500 3 3-2 1.500z" fill="#e94b4b" />
  </g>
);
const TExtrude = () => (
  <g>
    <path d="M0 18h11l4-3v4l-4 3H0z" fill="#b9b9b9" stroke="#888" strokeWidth=".6" />
    <path d="M0 5h11v13H0z" fill="#58a5e6" /><path d="M0 5l4-4h11l-4 4z" fill="#8fd0ff" /><path d="M11 5l4-4v13l-4 4z" fill="#2f7fc6" />
    <path d="M18.500 4v14" stroke="#333" strokeWidth="1.300" /><path d="M16.500 5l2-4 2 4z" fill="#333" />
  </g>
);
const TRevolve = () => (
  <g>
    <path d="M2 5C7 1 13 1 18 5" fill="none" stroke="#333" strokeWidth="1.700" /><path d="M0 7l1-5 4 3z" fill="#333" />
    <path d="M0 10C6 5 13 5 20 10l-3 4C12 12 8 12 4 15z" fill="#8fd0ff" />
    <path d="M0 10c1 2 2 3 4 4 4-2 8-2 12-.500V20c-4-1-8-1-11 1-3-1-5-4-5-6z" fill="#4c9de0" />
    <path d="M15.500 13.500l4-3.500v7l-4 3.500z" fill="#fff" stroke="#333" strokeWidth="1.200" />
  </g>
);
const steps = ["s", "e", "S", "r", "s", "e", "s", "r", "s", "e", "s", "r"];

function Timeline() {
  return (
    <div className="h-[62px] border-t-2 border-[#cbcbcb] bg-[#f1f1f1]">
      <div className="flex h-[60px]">
        <svg width="182" height="60" viewBox="0 970 182 60" fill="#4d4d4d" className="shrink-0">
          <path d="M14 991h2.200v18H14zM29 991v18l-13-9zM56 991v18l-12-9zM57.500 996h2.500v8h-2.500zM76 990v20l15-10zM106.500 996h2.500v8h-2.500zM110 991v18l12-9zM139 991v18l13-9zM151.800 991h2.200v18h-2.200z" />
        </svg>
        <div className="pt-[13px]">
          <div className="flex">
            {steps.map((s, i) => (
              <div key={i} className={"flex h-[30px] w-[30px] items-start pt-[4px] " + (s === "S" ? "-ml-[4px] mr-[4px] rounded-[2px] bg-[#0696d7] pl-[5px]" : i > 3 ? "pl-[.500px] opacity-25" : "pl-[.500px]")}>
                <svg width="22" height="23" viewBox="0 0 22 23">{s === "e" ? <TExtrude /> : s === "r" ? <TRevolve /> : <TSketch sel={s === "S"} />}</svg>
              </div>
            ))}
          </div>
          <svg width="360" height="10" viewBox="0 0 360 10" className="block">
            <path d="M11.500 0v6.500h330V0M41 0v6M71 0v6M101 0v6M131 0v6M161 0v6M191 0v6M221 0v6M251 0v6M281 0v6M311 0v6" fill="none" stroke="#cbcbcb" strokeWidth="2.600" />
          </svg>
        </div>
        <svg width="16" height="60" viewBox="0 970 16 60" className="-ml-[13px] shrink-0">
          <path d="M1 981h14v5l-5.500 5V1021h-3v-30L1 986z" fill="#666" />
        </svg>
        <span className="ml-auto mr-[16px] flex items-center"><Gear size={20} color="#888" /></span>
      </div>
    </div>
  );
}

export default function App() {
  return (
    <div className="h-[1032px] w-[1920px] overflow-hidden bg-white font-['Liberation_Sans',Arial,sans-serif]">
      <TitleBar />
      <TabStrip />
      <Ribbon />
      <Viewport />
      <Timeline />
      <div className="flex h-[2px] bg-[#1c2836]">
        <div className="ml-[60px] w-[430px] bg-[#d8d8d8]" />
      </div>
    </div>
  );
}
